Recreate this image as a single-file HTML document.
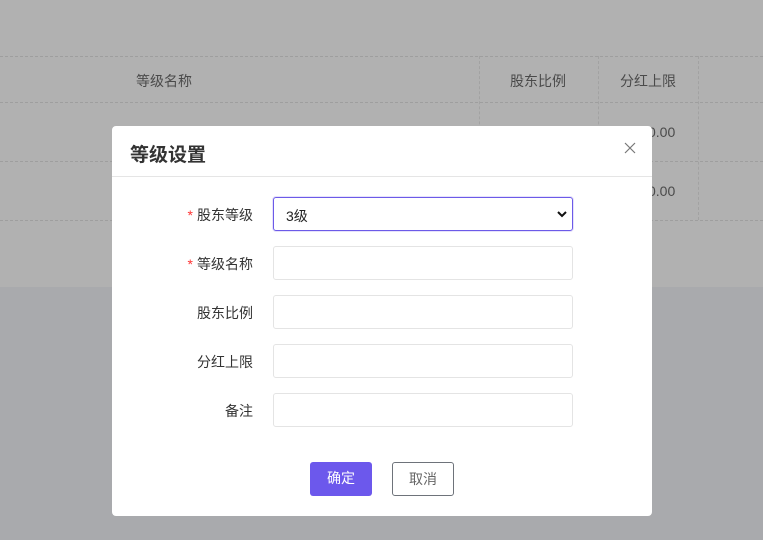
<!DOCTYPE html>
<html><head><meta charset="utf-8"><style>
*{box-sizing:border-box;margin:0;padding:0}
body{width:763px;height:540px;overflow:hidden;background:#a9aaad;font-family:"Liberation Sans","Noto Sans CJK SC",sans-serif;position:relative}
.top{position:absolute;left:0;top:0;width:763px;height:287px;background:#b1b1b1}
.hl{position:absolute;left:0;width:763px;border-top:1px dashed #9e9e9e}
.vl{position:absolute;top:56px;height:164px;border-left:1px dashed #a2a2a2}
.t{position:absolute;font-size:14px;color:#4a4a4a}
.modal{position:absolute;left:112px;top:126px;width:540px;height:390px;background:#fff;border-radius:4px}
.hd{height:51px;border-bottom:1px solid #e5e5e5;position:relative}
.hd b{position:absolute;left:18px;top:14px;font-size:19px;color:#333}
.x{position:absolute;right:16px;top:16px}
.row{position:absolute;left:0;width:540px;height:34px}
.lab{position:absolute;right:399px;top:8px;font-size:14px;color:#333;white-space:nowrap}
.lab i{color:#f33;font-style:normal;margin-right:4px}
.in{position:absolute;left:161px;top:0;width:300px;height:34px;border:1px solid #e4e4e4;border-radius:3px}
.sel{border:1px solid #6c5ae8;box-shadow:0 0 0 1px #e6e2fb}
.btn{position:absolute;top:336px;height:34px;border-radius:3px;font-size:14px;text-align:center;line-height:32px}
</style></head><body>
<div class="top"></div>
<div class="hl" style="top:56px"></div>
<div class="hl" style="top:102px"></div>
<div class="hl" style="top:161px"></div>
<div class="hl" style="top:220px"></div>
<div class="vl" style="left:479px"></div>
<div class="vl" style="left:598px"></div>
<div class="vl" style="left:698px"></div>
<div class="t" style="left:136px;top:71px">等级名称</div>
<div class="t" style="left:510px;top:71px">股东比例</div>
<div class="t" style="left:620px;top:71px">分红上限</div>
<div class="t" style="left:648px;top:124px">0.00</div>
<div class="t" style="left:648px;top:183px">0.00</div>
<div class="modal">
<div class="hd"><b>等级设置</b>
<svg class="x" width="12" height="12" viewBox="0 0 12 12"><path d="M1 1L11 11M11 1L1 11" stroke="#777" stroke-width="1.2"/></svg></div>
<div class="row" style="top:71px"><div class="lab"><i>*</i>股东等级</div><div class="in sel"><span style="position:absolute;left:12px;top:8px;font-size:14px;color:#222">3级</span><svg style="position:absolute;right:5px;top:13px" width="10" height="7" viewBox="0 0 10 7"><path d="M1 1L5 5L9 1" stroke="#111" stroke-width="2" fill="none"/></svg></div></div>
<div class="row" style="top:120px"><div class="lab"><i>*</i>等级名称</div><div class="in"></div></div>
<div class="row" style="top:169px"><div class="lab">股东比例</div><div class="in"></div></div>
<div class="row" style="top:218px"><div class="lab">分红上限</div><div class="in"></div></div>
<div class="row" style="top:267px"><div class="lab">备注</div><div class="in"></div></div>
<div class="btn" style="left:198px;width:62px;background:#6c58ec;color:#fff">确定</div>
<div class="btn" style="left:280px;width:62px;border:1px solid #6e737a;color:#666">取消</div>
</div>
</body></html>
